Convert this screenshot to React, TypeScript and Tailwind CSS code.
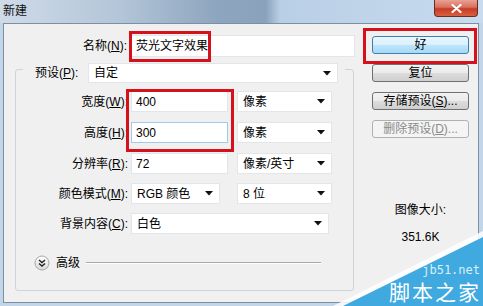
import React from "react";

const Arrow = () => (
  <svg width="8" height="5" viewBox="0 0 8 5" className="shrink-0">
    <polygon points="0,0 8,0 4,4.5" fill="#111" />
  </svg>
);

function Select({ cls, text }: { cls: string; text: string }) {
  return (
    <div className={`${cls} h-[21px] bg-white border border-[#e2e5e9] flex items-center justify-between pl-[5px] pr-[6px]`}>
      <span className="leading-[14px]">{text}</span>
      <Arrow />
    </div>
  );
}

function Input({ text, focus }: { text: string; focus?: boolean }) {
  return (
    <div
      className={`w-[97px] h-[21px] bg-white border ${focus ? "border-[#a3c8e8]" : "border-[#e2e5e9]"} flex items-center pl-[4px]`}
    >
      <span className="leading-[14px]">{text}</span>
    </div>
  );
}

function Label({ children, cls = "w-[112px]" }: { children: React.ReactNode; cls?: string }) {
  return <span className={`${cls} text-right leading-[14px] shrink-0`}>{children}</span>;
}

function Btn({ children, kind = "normal", cls = "" }: { children: React.ReactNode; kind?: "normal" | "default" | "disabled"; cls?: string }) {
  const style =
    kind === "default"
      ? "bg-[linear-gradient(#eaf6fd_0%,#d9f0fc_50%,#bee6fd_50%,#a7d9f5_100%)] border-[#3c7fb1] text-black"
      : kind === "disabled"
      ? "bg-[#f4f4f4] border-[#adb2b5] text-[#8a8a8a]"
      : "bg-[linear-gradient(#f2f2f2_0%,#ebebeb_50%,#dddddd_50%,#cfcfcf_100%)] border-[#707070] text-black";
  return (
    <div className={`${cls} w-[97px] h-[18px] rounded-[3px] border ${style} flex items-center justify-center leading-[14px]`}>
      {children}
    </div>
  );
}

export default function App() {
  return (
    <div className="relative w-[483px] h-[306px] overflow-hidden flex flex-col bg-[#c3d5e8] text-[12px] text-black font-['Liberation_Sans','Noto_Sans_CJK_SC',sans-serif]">
      {/* Title bar */}
      <div className="h-[23px] shrink-0 flex items-start bg-[linear-gradient(to_right,#cfdbe8_0%,#b3c5d8_25%,#8da5be_45%,#8aa2bb_55%,#b9cfe5_58%,#c8dbef_100%)]">
        <span className="pl-[3px] pt-[3px] leading-[16px] text-[#111]">新建</span>
        <div className="ml-auto mr-[5px] w-[44px] h-[17px] rounded-b-[4px] border border-t-0 border-[#6b2c24] bg-[linear-gradient(#e8a293_0%,#d7705f_45%,#c63c27_55%,#d9603f_100%)] flex items-center justify-center">
          <svg width="11" height="9" viewBox="0 0 11 9">
            <path d="M1.5 1 L9.5 8 M9.5 1 L1.5 8" stroke="#fff" strokeWidth="2.2" strokeLinecap="round" />
          </svg>
        </div>
      </div>

      {/* Body */}
      <div className="ml-[3px] mr-[4px] h-[280px] shrink-0 border border-[#7d8fa3] bg-[#f0f0f0] flex">
        {/* Left column */}
        <div className="w-[352px] shrink-0 pl-[11px] pt-[11px] flex flex-col">
          <div className="flex items-center h-[22px] gap-[3px]">
            <Label cls="w-[112px]">
              名称(<u>N</u>):
            </Label>
            <div className="ml-[1px] w-[224px] h-[22px] bg-white border border-[#e2e5e9] flex items-center pl-[4px]">
              <span className="leading-[14px]">荧光文字效果</span>
            </div>
          </div>

          <div className="mt-[12px] w-[339px] border border-[#cdd4da] rounded-[3px] flex flex-col pb-[19px]">
            {/* legend row */}
            <div className="-mt-[7px] ml-[7px] self-start flex items-center h-[20px] bg-[#f0f0f0] pl-[12px] pr-[7px] gap-[3px]">
              <span className="w-[50px] leading-[14px]">
                预设(<u>P</u>):
              </span>
              <div className="w-[250px] h-[20px] bg-white border border-[#e2e5e9] flex items-center justify-between pl-[5px] pr-[6px]">
                <span className="leading-[14px]">自定</span>
                <Arrow />
              </div>
            </div>

            <div className="mt-[8px] flex items-center h-[21px] gap-[3px]">
              <Label>
                宽度(<u>W</u>):
              </Label>
              <Input text="400" />
              <div className="w-[3px]" />
              <Select cls="w-[95px]" text="像素" />
            </div>
            <div className="mt-[10px] flex items-center h-[21px] gap-[3px]">
              <Label>
                高度(<u>H</u>):
              </Label>
              <Input text="300" focus />
              <div className="w-[3px]" />
              <Select cls="w-[95px]" text="像素" />
            </div>
            <div className="mt-[10px] flex items-center h-[21px] gap-[3px]">
              <Label>
                分辨率(<u>R</u>):
              </Label>
              <Input text="72" />
              <div className="w-[3px]" />
              <Select cls="w-[95px]" text="像素/英寸" />
            </div>
            <div className="mt-[9px] flex items-center h-[21px] gap-[3px]">
              <Label>
                颜色模式(<u>M</u>):
              </Label>
              <Select cls="w-[89px]" text="RGB 颜色" />
              <div className="w-[11px]" />
              <Select cls="w-[95px]" text="8 位" />
            </div>
            <div className="mt-[9px] flex items-center h-[21px] gap-[3px]">
              <Label>
                背景内容(<u>C</u>):
              </Label>
              <Select cls="w-[198px]" text="白色" />
            </div>

            <div className="mt-[21px] flex items-center h-[16px] pl-[18px] pr-[32px]">
              <svg width="16" height="16" viewBox="0 0 16 16" className="shrink-0">
                <defs>
                  <linearGradient id="cg" x1="0" y1="0" x2="0" y2="1">
                    <stop offset="0" stopColor="#ffffff" />
                    <stop offset="1" stopColor="#d9d9d9" />
                  </linearGradient>
                </defs>
                <circle cx="8" cy="8" r="7" fill="url(#cg)" stroke="#a8a8a8" strokeWidth="1" />
                <polyline points="5,5 8,7.5 11,5" fill="none" stroke="#222" strokeWidth="1.4" />
                <polyline points="5,8.5 8,11 11,8.5" fill="none" stroke="#222" strokeWidth="1.4" />
              </svg>
              <span className="ml-[6px] leading-[14px]">高级</span>
              <div className="ml-[6px] flex-1 h-[2px] border-t border-[#a9a9a9] border-b border-b-white" />
            </div>
          </div>
        </div>

        {/* Right column */}
        <div className="flex-1 pl-[16px] pt-[12px] flex flex-col items-start">
          <Btn kind="default">好</Btn>
          <Btn cls="mt-[10px]">复位</Btn>
          <Btn cls="mt-[10px]">
            存储预设(<u>S</u>)...
          </Btn>
          <Btn cls="mt-[10px]" kind="disabled">
            删除预设(<u>D</u>)...
          </Btn>
          <div className="w-[97px] mt-[65px] text-center leading-[14px]">图像大小:</div>
          <div className="w-[97px] mt-[13px] text-center leading-[14px]">351.6K</div>
        </div>
      </div>

      {/* Annotation boxes */}
      <div className="absolute left-[129px] top-[31px] w-[82px] h-[31px] border-[3px] border-[#d5121b]" />
      <div className="absolute left-[126px] top-[89px] w-[108px] h-[63px] border-[3px] border-[#d5121b]" />
      <div className="absolute left-[363px] top-[28px] w-[114px] h-[36px] border-[3px] border-[#d5121b]" />

      {/* Watermark */}
      <svg className="absolute right-0 bottom-0" width="160" height="80" viewBox="0 0 160 80">
        <polygon points="10,80 160,5 160,80" fill="#ffffff" opacity="0.85" />
        <polygon points="20,80 160,11 160,80" fill="#3fa9e0" />
      </svg>
      <div className="absolute right-[3px] top-[264px] leading-[12px] text-[12px] text-[#dbeffa] font-['DejaVu_Sans_Mono',monospace]">
        jb51.net
      </div>
      <div className="absolute right-[2px] top-[281px] leading-[21px] text-[21px] tracking-[2px] text-white font-['Noto_Sans_CJK_SC',sans-serif]">
        脚本之家
      </div>
    </div>
  );
}
